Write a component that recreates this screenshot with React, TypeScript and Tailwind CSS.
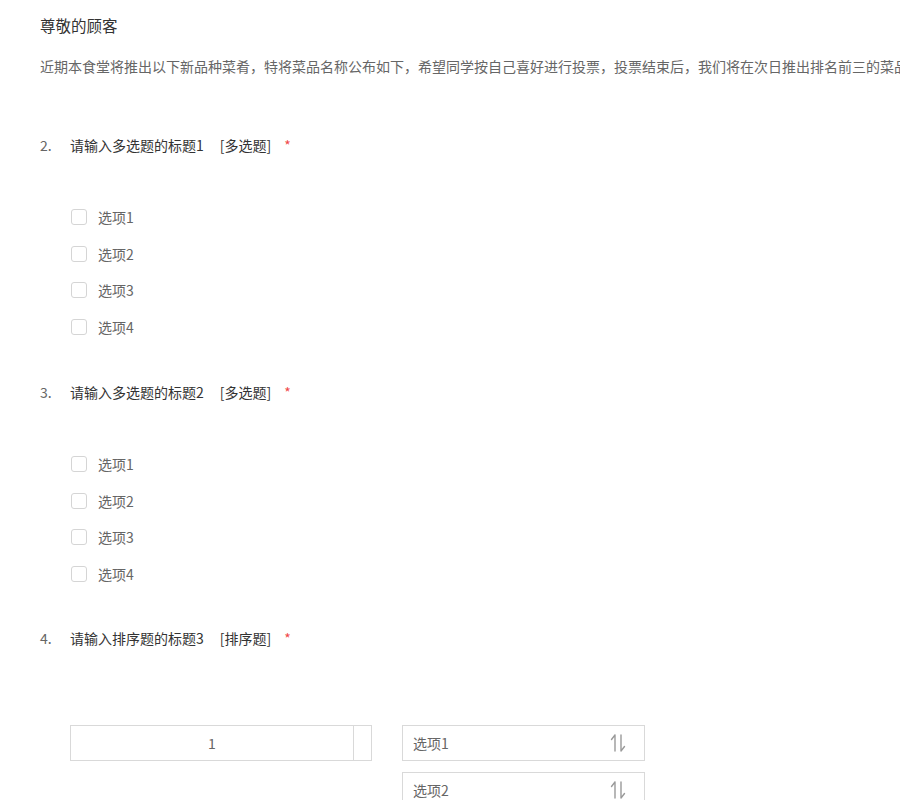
import React from "react";

const font = { fontFamily: '"Microsoft YaHei", "Noto Sans CJK SC", "Noto Sans", sans-serif' };

// sort handle: up hook on the left line, down hook on the right line
const SortIcon = () => (
  <svg width="16" height="20" viewBox="0 0 16 20" fill="none" stroke="#9a9a9a" strokeWidth="1.4" strokeLinecap="round">
    <path d="M5 2v16M5 2L1.5 6.5" />
    <path d="M11 2v16M11 18l3.5-4.5" />
  </svg>
);

const Checkbox = ({ label }: { label: string }) => (
  <label className="flex items-center h-[20px] ml-[31px] cursor-pointer">
    <span className="w-[16px] h-[16px] rounded-[3px] border border-[#d5d5d5] bg-white" />
    <span className="ml-[11px] text-[14px] text-[#666] leading-[20px]">{label}</span>
  </label>
);

const QuestionTitle = ({ no, title, kind }: { no: string; title: string; kind: string }) => (
  <div className="flex items-center h-[20px] text-[14px] leading-[20px]">
    <span className="w-[30px] text-[#666]">{no}</span>
    <span className="text-[#333]">{title}</span>
    <span className="ml-[16px] text-[#333]">[{kind}]</span>
    <span className="ml-[13px] text-[#f04a4a]">*</span>
  </div>
);

const MultiQuestion = ({ no, title }: { no: string; title: string }) => (
  <div>
    <QuestionTitle no={no} title={title} kind="多选题" />
    <div className="mt-[52px] flex flex-col gap-[16.7px]">
      {["选项1", "选项2", "选项3", "选项4"].map((o) => (
        <Checkbox key={o} label={o} />
      ))}
    </div>
  </div>
);

export default function App() {
  return (
    <div className="w-[900px] h-[800px] overflow-hidden bg-white" style={font}>
      <div className="pl-[40px] pt-[15px]">
        <h1 className="text-[15.5px] leading-[20px] text-[#333]">尊敬的顾客</h1>
        <p className="mt-[21px] text-[14px] leading-[20px] text-[#666] whitespace-nowrap">
          近期本食堂将推出以下新品种菜肴，特将菜品名称公布如下，希望同学按自己喜好进行投票，投票结束后，我们将在次日推出排名前三的菜品，敬请期待。
        </p>

        <div className="mt-[59px]">
          <MultiQuestion no="2." title="请输入多选题的标题1" />
        </div>
        <div className="mt-[45px]">
          <MultiQuestion no="3." title="请输入多选题的标题2" />
        </div>

        <div className="mt-[44px]">
          <QuestionTitle no="4." title="请输入排序题的标题3" kind="排序题" />
          <div className="mt-[77px] ml-[30px] flex gap-[30px]">
            <div className="w-[302px] h-[36px] border border-[#d9d9d9] flex">
              <div className="flex-1 flex items-center justify-center text-[14px] text-[#666]">1</div>
              <div className="w-[18px] border-l border-[#d9d9d9]" />
            </div>
            <div className="flex flex-col gap-[11px]">
              {["选项1", "选项2"].map((o) => (
                <div key={o} className="w-[243px] h-[36px] border border-[#d9d9d9] flex items-center justify-between pl-[10px] pr-[18px]">
                  <span className="text-[14px] text-[#666]">{o}</span>
                  <SortIcon />
                </div>
              ))}
            </div>
          </div>
        </div>
      </div>
    </div>
  );
}
